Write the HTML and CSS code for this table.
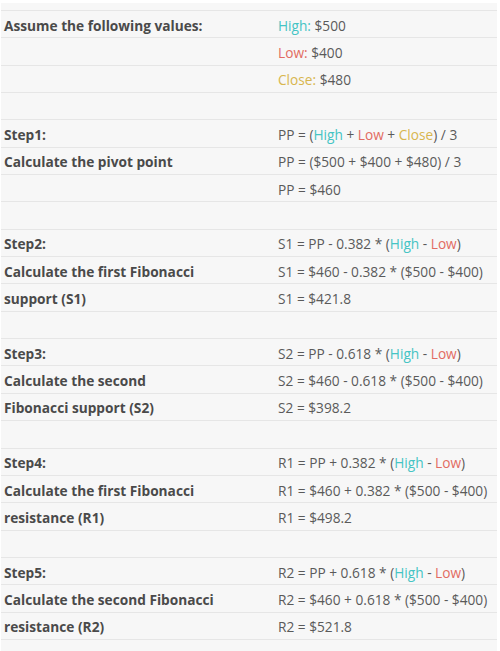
FILE: index.html
```html
<!DOCTYPE html>
<html>
<head>
<meta charset="utf-8">
<link rel="stylesheet" href="styles.css">
</head>
<body>
<div class="sheet">
  <div class="row"><div class="l">Assume the following values:</div><div class="r"><span class="hi">High:</span> $500</div></div>
  <div class="row"><div class="l"></div><div class="r"><span class="lo">Low:</span> $400</div></div>
  <div class="row"><div class="l"></div><div class="r"><span class="cl">Close:</span> $480</div></div>
  <div class="row"><div class="l"></div><div class="r"></div></div>

  <div class="row"><div class="l">Step1:</div><div class="r">PP = (<span class="hi">High</span> + <span class="lo">Low</span> + <span class="cl">Close</span>) / 3</div></div>
  <div class="row"><div class="l">Calculate the pivot point</div><div class="r">PP = ($500 + $400 + $480) / 3</div></div>
  <div class="row"><div class="l"></div><div class="r">PP = $460</div></div>
  <div class="row"><div class="l"></div><div class="r"></div></div>

  <div class="row"><div class="l">Step2:</div><div class="r">S1 = PP - 0.382 * (<span class="hi">High</span> - <span class="lo">Low</span>)</div></div>
  <div class="row"><div class="l">Calculate the first Fibonacci</div><div class="r">S1 = $460 - 0.382 * ($500 - $400)</div></div>
  <div class="row"><div class="l">support (S1)</div><div class="r">S1 = $421.8</div></div>
  <div class="row"><div class="l"></div><div class="r"></div></div>

  <div class="row"><div class="l">Step3:</div><div class="r">S2 = PP - 0.618 * (<span class="hi">High</span> - <span class="lo">Low</span>)</div></div>
  <div class="row"><div class="l">Calculate the second</div><div class="r">S2 = $460 - 0.618 * ($500 - $400)</div></div>
  <div class="row"><div class="l">Fibonacci support (S2)</div><div class="r">S2 = $398.2</div></div>
  <div class="row"><div class="l"></div><div class="r"></div></div>

  <div class="row"><div class="l">Step4:</div><div class="r">R1 = PP + 0.382 * (<span class="hi">High</span> - <span class="lo">Low</span>)</div></div>
  <div class="row"><div class="l">Calculate the first Fibonacci</div><div class="r">R1 = $460 + 0.382 * ($500 - $400)</div></div>
  <div class="row"><div class="l">resistance (R1)</div><div class="r">R1 = $498.2</div></div>
  <div class="row"><div class="l"></div><div class="r"></div></div>

  <div class="row"><div class="l">Step5:</div><div class="r">R2 = PP + 0.618 * (<span class="hi">High</span> - <span class="lo">Low</span>)</div></div>
  <div class="row"><div class="l">Calculate the second Fibonacci</div><div class="r">R2 = $460 + 0.618 * ($500 - $400)</div></div>
  <div class="row"><div class="l">resistance (R2)</div><div class="r">R2 = $521.8</div></div>
  <div class="row"><div class="l"></div><div class="r"></div></div>
</div>
</body>
</html>
```
FILE: styles.css
```css
html, body {
  margin: 0;
  padding: 0;
  background: #ffffff;
  overflow: hidden;
}
.sheet {
  margin: 3px 3px 0 1px;
  padding-top: 7px;
  background: #f7f7f7;
  font-family: "Open Sans", sans-serif;
  font-size: 13.7px;
  color: #555;
}
.row {
  display: grid;
  grid-template-columns: 274px 1fr;
  height: 27.35px;
  box-sizing: border-box;
  border-top: 1px solid #e6e6e6;
  align-items: center;
  white-space: nowrap;
}
.l {
  padding-left: 3px;
  font-weight: 700;
  color: #4a4a4a;
  padding-top: 2px;
}
.r {
  padding-left: 3px;
  padding-top: 2px;
  color: #5a5a5a;
}
.hi { color: #45c4c4; }
.lo { color: #e26b62; }
.cl { color: #d8b64e; }
```
